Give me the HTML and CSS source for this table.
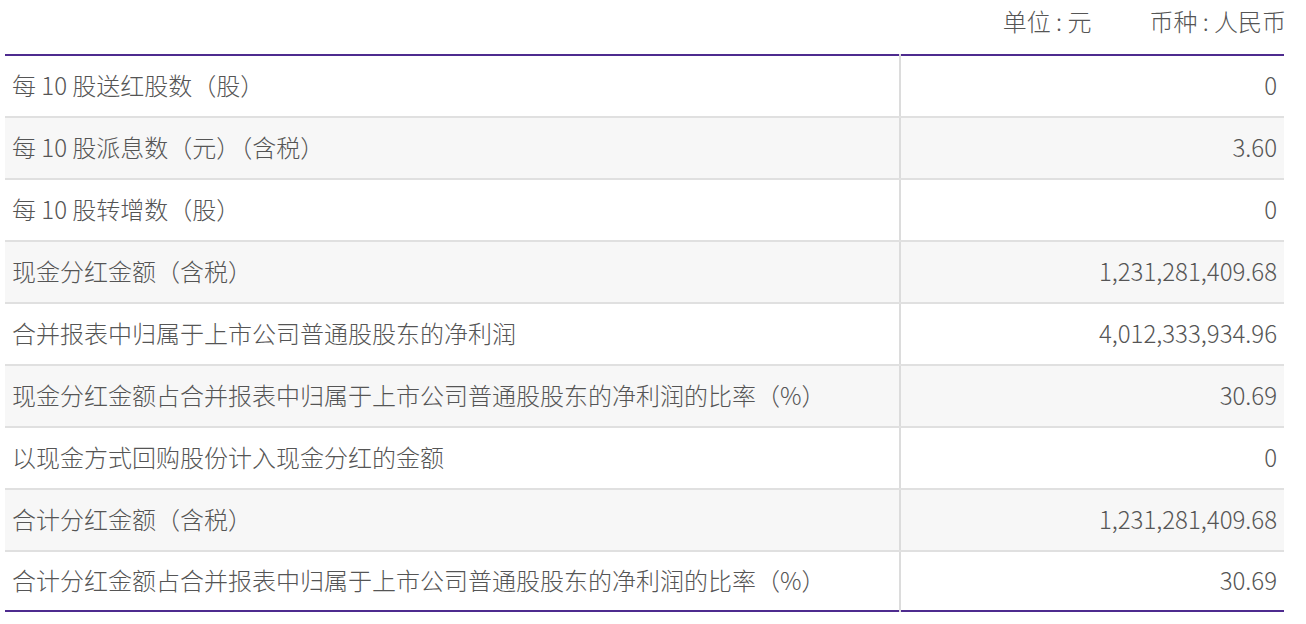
FILE: index.html
```html
<!DOCTYPE html>
<html lang="zh-CN">
<head>
<meta charset="utf-8">
<link rel="stylesheet" href="styles.css">
</head>
<body>
<div class="wrap">
  <div class="unit">
    <span>单位 : 元</span>
    <span>币种 : 人民币</span>
  </div>
  <table class="tbl">
    <tbody>
      <tr><td class="lbl">每 10 股送红股数（股）</td><td class="val">0</td></tr>
      <tr class="alt"><td class="lbl">每 10 股派息数（元）（含税）</td><td class="val">3.60</td></tr>
      <tr><td class="lbl">每 10 股转增数（股）</td><td class="val">0</td></tr>
      <tr class="alt"><td class="lbl">现金分红金额（含税）</td><td class="val">1,231,281,409.68</td></tr>
      <tr><td class="lbl">合并报表中归属于上市公司普通股股东的净利润</td><td class="val">4,012,333,934.96</td></tr>
      <tr class="alt"><td class="lbl">现金分红金额占合并报表中归属于上市公司普通股股东的净利润的比率（%）</td><td class="val">30.69</td></tr>
      <tr><td class="lbl">以现金方式回购股份计入现金分红的金额</td><td class="val">0</td></tr>
      <tr class="alt"><td class="lbl">合计分红金额（含税）</td><td class="val">1,231,281,409.68</td></tr>
      <tr class="last"><td class="lbl">合计分红金额占合并报表中归属于上市公司普通股股东的净利润的比率（%）</td><td class="val">30.69</td></tr>
    </tbody>
  </table>
</div>
</body>
</html>
```

FILE: styles.css
```css
html, body {
  margin: 0;
  padding: 0;
  background: #ffffff;
}
body {
  font-family: "Noto Sans CJK SC", "Noto Sans", sans-serif;
  color: #555555;
  font-size: 24px;
  font-weight: 300;
}
.wrap {
  margin-left: 5px;
  width: 1279px;
}
.unit {
  height: 54px;
  display: flex;
  justify-content: flex-end;
  align-items: flex-start;
  gap: 58px;
  margin-right: -2px;
  line-height: 42px;
  white-space: pre;
}
.tbl {
  width: 100%;
  border-collapse: collapse;
  border-top: 2px solid #4e2b8f;
  border-bottom: 2px solid #4e2b8f;
}
.tbl td {
  height: 57px;
  padding: 0 7px 3px;
  border-bottom: 2px solid #e0e0e0;
  vertical-align: middle;
  line-height: 30px;
}
.tbl tr.last td {
  border-bottom: none;
  height: 55px;
}
.tbl .lbl {
  width: 880px;
  border-right: 2px solid #dcdcdc;
  padding-left: 7px;
}
.tbl .val {
  text-align: right;
}
.tbl tr.alt td {
  background: #f7f7f7;
}
```
